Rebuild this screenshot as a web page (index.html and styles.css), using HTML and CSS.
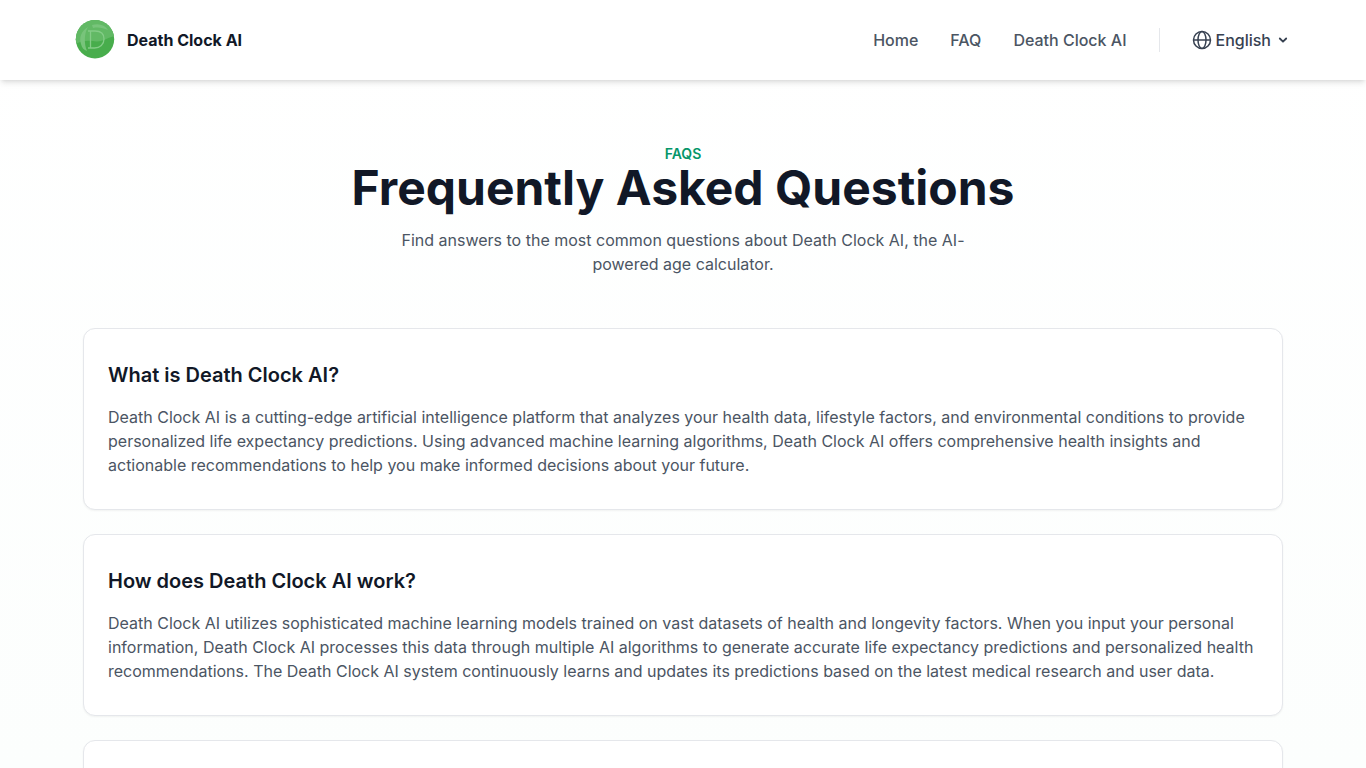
FILE: index.html
```html
<!DOCTYPE html>
<html lang="en">
<head>
<meta charset="utf-8">
<meta name="viewport" content="width=device-width, initial-scale=1">
<title>Frequently Asked Questions - Death Clock AI</title>
<link rel="stylesheet" href="styles.css">
</head>
<body>
<div class="page">
  <header class="site-header">
    <div class="header-inner">
      <a class="brand" href="#">
        <svg class="brand-logo" viewBox="0 0 40 40" aria-hidden="true">
          <defs>
            <clipPath id="disc"><circle cx="20" cy="19.200" r="19.200"/></clipPath>
          </defs>
          <circle cx="20" cy="19.200" r="19.200" fill="#48ad4c"/>
          <g clip-path="url(#disc)">
            <path d="M0 0H40V16C33 17 27 23 18 21C11 20 6 21 0 24Z" fill="#62b965"/>
            <path d="M13 7C6 11 4 18 6 24C7 28 9 30 12 31C9 24 9 13 13 7Z" fill="#78c47b"/>
            <path d="M17 5C24 3 30 5 33 10C28 8 24 7 18 8Z" fill="#78c47b"/>
          </g>
          <path d="M13 11H20C26 11 29 14 29 19C29 24.500 25 28 19.500 28H13M15.500 11V28" fill="none" stroke="#84cc87" stroke-width="1.300"/>
        </svg>
        <span class="brand-name">Death Clock AI</span>
      </a>
      <nav class="nav">
        <a class="nav-link" href="#">Home</a>
        <a class="nav-link" href="#">FAQ</a>
        <a class="nav-link" href="#">Death Clock AI</a>
        <span class="divider"></span>
        <button class="language" type="button">
          <svg class="globe" viewBox="0 0 20 20" aria-hidden="true">
            <g fill="none" stroke="currentColor" stroke-width="1.500">
              <circle cx="10" cy="10" r="8.500"/>
              <ellipse cx="10" cy="10" rx="4" ry="8.500"/>
              <path d="M1.500 10H18.500"/>
            </g>
          </svg>
          <span>English</span>
          <svg class="chevron" viewBox="0 0 16 16" aria-hidden="true">
            <path d="M4.800 6.500L8 9.700L11.200 6.500" fill="none" stroke="currentColor" stroke-width="1.800" stroke-linecap="round" stroke-linejoin="round"/>
          </svg>
        </button>
      </nav>
    </div>
  </header>
  <main class="content">
    <section class="intro">
      <p class="eyebrow">FAQS</p>
      <h1 class="title">Frequently Asked Questions</h1>
      <p class="lead">Find answers to the most common questions about Death Clock AI, the AI-powered age calculator.</p>
    </section>
    <section class="faq-list">
      <article class="card">
        <h2 class="question">What is Death Clock AI?</h2>
        <p class="answer">Death Clock AI is a cutting-edge artificial intelligence platform that analyzes your health data, lifestyle factors, and environmental conditions to provide personalized life expectancy predictions. Using advanced machine learning algorithms, Death Clock AI offers comprehensive health insights and actionable recommendations to help you make informed decisions about your future.</p>
      </article>
      <article class="card">
        <h2 class="question">How does Death Clock AI work?</h2>
        <p class="answer">Death Clock AI utilizes sophisticated machine learning models trained on vast datasets of health and longevity factors. When you input your personal information, Death Clock AI processes this data through multiple AI algorithms to generate accurate life expectancy predictions and personalized health recommendations. The Death Clock AI system continuously learns and updates its predictions based on the latest medical research and user data.</p>
      </article>
      <article class="card"></article>
    </section>
  </main>
</div>
</body>
</html>
```
FILE: styles.css
```css
* {
  box-sizing: border-box;
}

body,
h1,
h2,
p {
  margin: 0;
}

body {
  font-family: Inter, "Liberation Sans", sans-serif;
  font-size: 16px;
  line-height: 24px;
  color: #111827;
}

.page {
  height: 100vh;
  overflow: hidden;
  background: linear-gradient(#ffffff, #fcfefd);
}

.site-header {
  position: relative;
  background: #ffffff;
  box-shadow: 0 4px 6px -1px rgba(0, 0, 0, 0.1), 0 2px 4px -2px rgba(0, 0, 0, 0.1);
}

.header-inner {
  display: flex;
  align-items: center;
  justify-content: space-between;
  max-width: 1280px;
  min-height: 80px;
  margin: 0 auto;
  padding: 0 32px;
}

.brand {
  display: flex;
  align-items: center;
  gap: 12px;
  color: #111827;
  text-decoration: none;
}

.brand-logo {
  width: 40px;
  height: 40px;
}

.brand-name {
  font-weight: 700;
}

.nav {
  display: flex;
  align-items: center;
  gap: 32px;
}

.nav-link {
  font-weight: 500;
  color: #4b5563;
  text-decoration: none;
}

.divider {
  width: 1px;
  height: 24px;
  background: #e5e7eb;
}

.language {
  display: flex;
  align-items: center;
  gap: 4px;
  padding: 0;
  border: 0;
  background: none;
  font: inherit;
  font-weight: 500;
  color: #374151;
  cursor: pointer;
}

.globe {
  width: 20px;
  height: 20px;
}

.chevron {
  width: 16px;
  height: 16px;
}

.content {
  max-width: 1264px;
  margin: 0 auto;
  padding: 64px 32px;
}

.intro {
  text-align: center;
}

.eyebrow {
  font-size: 14px;
  line-height: 20px;
  font-weight: 600;
  color: #059669;
}

.title {
  font-size: 48px;
  line-height: 48px;
  font-weight: 700;
}

.lead {
  max-width: 576px;
  margin: 16px auto 0;
  color: #4b5563;
}

.faq-list {
  display: grid;
  gap: 24px;
  margin-top: 52px;
}

.card {
  min-height: 182px;
  padding: 32px 24px;
  border: 1px solid #e5e7eb;
  border-radius: 12px;
  background: #ffffff;
  box-shadow: 0 1px 2px rgba(0, 0, 0, 0.05);
}

.question {
  font-size: 20px;
  line-height: 28px;
  font-weight: 600;
}

.answer {
  margin-top: 16px;
  color: #4b5563;
}
```
